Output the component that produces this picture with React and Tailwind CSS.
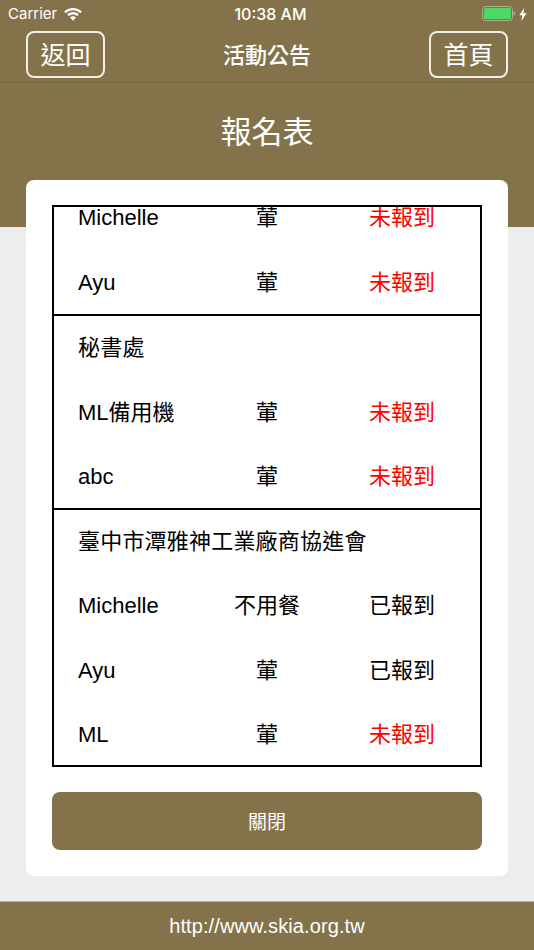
const CJK = '"Noto Sans CJK TC", sans-serif';

const GROUPS = [
  {
    rows: [
      ["Michelle", "葷", "未報到"],
      ["Ayu", "葷", "未報到"],
    ],
  },
  {
    title: "秘書處",
    rows: [
      ["ML備用機", "葷", "未報到"],
      ["abc", "葷", "未報到"],
    ],
  },
  {
    title: "臺中市潭雅神工業廠商協進會",
    rows: [
      ["Michelle", "不用餐", "已報到"],
      ["Ayu", "葷", "已報到"],
      ["ML", "葷", "未報到"],
    ],
  },
];

function WifiIcon() {
  return (
    <svg width="18" height="13" viewBox="0 0 18 13" fill="#fff">
      <path d="M9 0C5.600 0 2.500 1.300 0.200 3.500L1.800 5.200C3.700 3.400 6.200 2.300 9 2.300s5.300 1.100 7.200 2.900l1.600-1.700C15.500 1.300 12.400 0 9 0z" />
      <path d="M9 4.100c-2.200 0-4.200.9-5.700 2.300l1.600 1.700C6 7 7.400 6.400 9 6.400s3 .6 4.100 1.700l1.600-1.700C13.200 5 11.200 4.100 9 4.100z" />
      <path d="M9 8.200c-1.100 0-2.100.4-2.900 1.200L9 12.800l2.900-3.400C11.100 8.600 10.100 8.200 9 8.200z" />
    </svg>
  );
}

function BatteryIcon() {
  return (
    <svg width="33" height="15" viewBox="0 0 33 15" className="-mt-[1px]">
      <rect x="0.5" y="0.5" width="30" height="14" rx="3" fill="none" stroke="#b5ac8c" />
      <rect x="2" y="2" width="27" height="11" rx="1.500" fill="#4cd964" />
      <rect x="31.500" y="5.500" width="1.500" height="4" rx="0.700" fill="#b5ac8c" />
    </svg>
  );
}

function BoltIcon() {
  return (
    <svg width="8" height="13" viewBox="0 0 8 13" fill="#fff">
      <path d="M5.200 0 0.300 7.300h3L2.400 13l5.200-7.800H4.500z" />
    </svg>
  );
}

function NavButton({ children }) {
  return (
    <button
      className="w-[79px] h-[47px] rounded-lg border-2 border-[#f1eee6] text-[25px] text-white flex items-center justify-center"
      style={{ fontFamily: CJK }}
    >
      {children}
    </button>
  );
}

function Row({ name, meal, status }) {
  return (
    <div className="h-[64.5px] grid grid-cols-[130px_118px_1fr] items-center pl-[24px] text-[22px] text-black">
      <span>{name}</span>
      <span className="text-center">{meal}</span>
      <span className={"pl-[43px] " + (status === "未報到" ? "text-[#ff0000]" : "text-black")}>{status}</span>
    </div>
  );
}

export default function App() {
  return (
    <div className="w-[534px] h-[950px] overflow-hidden flex flex-col bg-[#ededed] font-['Liberation_Sans','Noto_Sans_CJK_TC',sans-serif]">
      <header className="bg-[#84734a] text-white">
        <div className="h-[28px] pl-[8px] pr-[7px] flex items-center justify-between font-['Inter',sans-serif] text-[15px]">
          <div className="flex items-center gap-[7px] w-[126px]">
            <span>Carrier</span>
            <WifiIcon />
          </div>
          <span className="text-[16px] font-medium">10:38 AM</span>
          <div className="flex items-center justify-end gap-[4px] w-[120px]">
            <BatteryIcon />
            <BoltIcon />
          </div>
        </div>
        <div className="h-[55px] px-[26px] pb-[2px] flex items-center justify-between border-b border-[#78683f]">
          <NavButton>返回</NavButton>
          <span className="text-[22px] font-medium mb-[2px]" style={{ fontFamily: CJK }}>活動公告</span>
          <NavButton>首頁</NavButton>
        </div>
        <div className="h-[144px] pt-[24px] text-center text-[31px] leading-[46px]" style={{ fontFamily: CJK }}>
          報名表
        </div>
      </header>

      <main className="flex-1 px-[26px] -mt-[47px]">
        <div className="h-[696px] rounded-lg bg-white px-[26px] pt-[25px]">
          <div className="h-[562px] border-2 border-black overflow-hidden">
            <div className="-mt-[21.5px]">
              {GROUPS.map((group, i) => (
                <div key={i} className={i > 0 ? "border-t-2 border-black -mt-[0.5px] -mb-[1px]" : ""}>
                  <div className={i === 1 ? "-mt-[0.5px]" : i === 2 ? "-mt-[1.25px]" : ""}>
                    {group.title && (
                      <div className="h-[64.5px] flex items-center pl-[24px] text-[22px] tracking-[0.2px] text-black">{group.title}</div>
                    )}
                    {group.rows.map((r, j) => (
                      <Row key={j} name={r[0]} meal={r[1]} status={r[2]} />
                    ))}
                  </div>
                </div>
              ))}
            </div>
          </div>
          <button
            className="mt-[25px] w-full h-[58px] rounded-lg bg-[#84734a] text-white text-[19px]"
            style={{ fontFamily: CJK }}
          >
            關閉
          </button>
        </div>
      </main>

      <footer className="h-[49px] border-t border-[#b8b09a] bg-[#84734a] flex items-center justify-center text-white text-[20px] tracking-[0.1px]">
        http://www.skia.org.tw
      </footer>
    </div>
  );
}
